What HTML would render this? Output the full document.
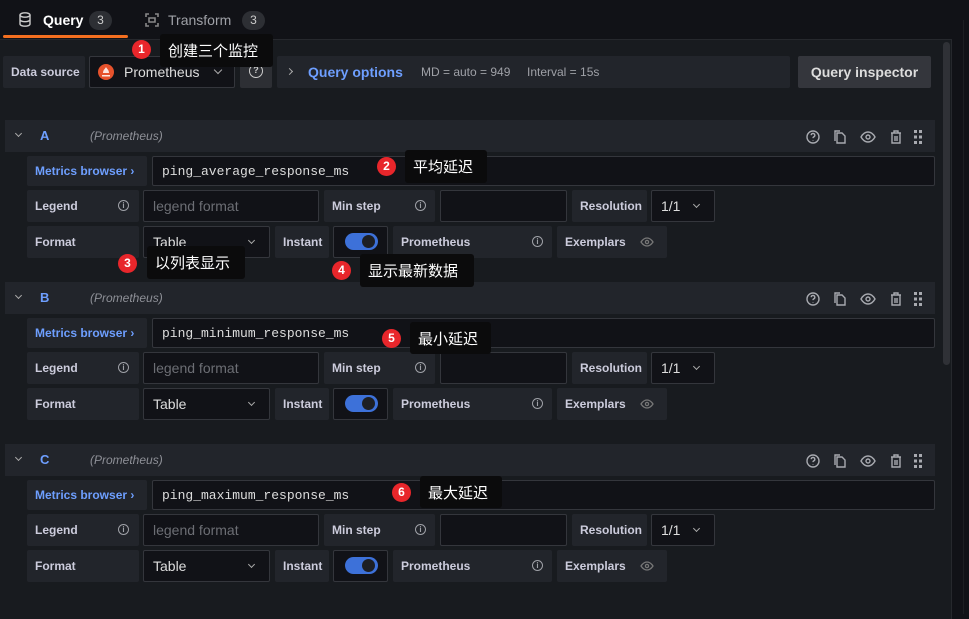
<!DOCTYPE html><html><head><meta charset="utf-8"><style>
*{box-sizing:border-box;margin:0;padding:0}
body{width:969px;height:614px;background:#111217;font-family:"Liberation Sans","Noto Sans CJK SC",sans-serif;color:#ccccdc;position:relative;overflow:hidden;font-size:12px}
.a{position:absolute}
.lbl{position:absolute;background:#22252b;border-radius:2px;font-weight:bold;font-size:12px;color:#ccccdc;display:flex;align-items:center;padding-left:8px}
.inp{position:absolute;background:#111217;border:1px solid #34363c;border-radius:2px;display:flex;align-items:center;padding-left:9px;font-size:14px}
.info{position:absolute;width:11px;height:11px;border:1.3px solid #9fa1a7;border-radius:50%;font-size:8px;line-height:9px;text-align:center;color:#9fa1a7;font-weight:bold}
.chev{position:absolute;width:6px;height:6px;border-right:1.4px solid #aaa;border-bottom:1.4px solid #aaa;transform:rotate(45deg)}
.dot{position:absolute;width:19px;height:19px;border-radius:50%;background:#e8262b;color:#fff;font-size:12px;text-align:center;line-height:19px;font-weight:bold}
.tip{position:absolute;background:#0b0b0c;color:#fff;font-size:15px;display:flex;align-items:center;padding-left:8px;border-radius:3px}
.blk{position:absolute;left:0;top:0;width:940px;height:162px}
.ic{position:absolute;top:9px}
</style></head><body>
<!-- tabs -->
<svg class="a" style="left:19px;top:12px" width="12" height="15" viewBox="0 0 12 15"><ellipse cx="6" cy="3" rx="5" ry="2.2" fill="none" stroke="#ccc" stroke-width="1.4"/><path d="M1 3v9c0 1.2 2.2 2.2 5 2.2s5-1 5-2.2V3M1 7.5c0 1.2 2.2 2.2 5 2.2s5-1 5-2.2" fill="none" stroke="#ccc" stroke-width="1.4"/></svg>
<div class="a" style="left:43px;top:12px;font-size:14px;font-weight:bold;color:#fff">Query</div>
<div class="a" style="left:89px;top:11px;width:23px;height:19px;border-radius:10px;background:#2d2f34;color:#ccc;text-align:center;line-height:19px;font-size:12px">3</div>
<div class="a" style="left:3px;top:35px;width:125px;height:3px;background:#f46f20;border-radius:2px"></div>
<svg class="a" style="left:145px;top:13px" width="14" height="14" viewBox="0 0 14 14" fill="none" stroke="#888" stroke-width="1.6"><path d="M1 4V1h3M10 1h3v3M13 10v3h-3M4 13H1v-3M4 5h6v4H4z"/></svg>
<div class="a" style="left:168px;top:12px;font-size:14px;color:#9fa1a7">Transform</div>
<div class="a" style="left:242px;top:11px;width:23px;height:19px;border-radius:10px;background:#2d2f34;color:#ccc;text-align:center;line-height:19px;font-size:12px">3</div>
<!-- panel -->
<div class="a" style="left:0;top:39px;width:952px;height:580px;background:#181b1f;border-top:1px solid #26282d;border-right:1px solid #26282d"></div>
<div class="a" style="left:943px;top:42px;width:7px;height:323px;background:#2f3136;border-radius:4px"></div>
<div class="a" style="left:963px;top:20px;width:1px;height:594px;background:#1c1e22"></div>
<!-- datasource row -->
<div class="lbl" style="left:3px;top:56px;width:82px;height:32px;padding-left:8px">Data source</div>
<div class="inp" style="left:89px;top:56px;width:146px;height:32px;padding-left:8px"><svg width="16" height="16" viewBox="0 0 16 16"><circle cx="8" cy="8" r="8" fill="#e6522c"/><path d="M4 11h8v1.5H4zM8 3c1 2 3 3 3 6H5c0-3 2-4 3-6z" fill="#fff" opacity=".85"/></svg><span style="margin-left:10px;color:#ddd">Prometheus</span></div>
<div class="chev" style="left:215px;top:67px"></div>
<div class="a" style="left:240px;top:56px;width:32px;height:32px;background:#2d2f34;border-radius:2px"></div>
<div class="info" style="left:249px;top:64px;width:14px;height:14px;line-height:11px;font-size:9px;color:#ccc;border-color:#ccc">?</div>
<div class="a" style="left:277px;top:56px;width:513px;height:32px;background:#22252b;border-radius:2px"></div>
<div class="chev" style="left:287px;top:69px;transform:rotate(-45deg);width:5px;height:5px"></div>
<div class="a" style="left:308px;top:64px;font-size:14px;font-weight:bold;color:#6e9fff">Query options</div>
<div class="a" style="left:421px;top:65px;font-size:12px;color:#9fa1a7">MD = auto = 949</div>
<div class="a" style="left:527px;top:65px;font-size:12px;color:#9fa1a7">Interval = 15s</div>
<div class="a" style="left:798px;top:56px;width:133px;height:32px;background:#34363c;border-radius:2px;color:#ddd;font-weight:bold;font-size:14px;text-align:center;line-height:32px">Query inspector</div>

<!-- blocks -->
<div class="blk" style="top:120px"><div class="a" style="left:5px;top:0;width:930px;height:32px;background:#22252b"></div>
<div class="chev" style="left:16px;top:11px;width:5px;height:5px"></div>
<div class="a" style="left:40px;top:8px;font-size:13px;font-weight:bold;color:#6e9fff">A</div>
<div class="a" style="left:90px;top:9px;font-size:12px;font-style:italic;color:#8e9097">(Prometheus)</div>
<svg class="ic" style="left:805px" width="118" height="16" viewBox="0 0 118 16" fill="none" stroke="#a8aab0" stroke-width="1.4"><circle cx="8" cy="8" r="6"/><path d="M6.2 6.2a1.8 1.8 0 1 1 2.5 1.7c-.5.3-.7.6-.7 1.2M8 11v.5"/><path d="M32 4h5l3 3v7h-8z M30 12V2h5"/><path d="M56 8c2-3.5 4-5 7-5s5 1.5 7 5c-2 3.5-4 5-7 5s-5-1.5-7-5z"/><circle cx="63" cy="8" r="2"/><path d="M86 4h10M89 4V2h4v2M87 4v10h8V4M90 7v5M92 7v5"/><g fill="#a8aab0" stroke="none"><rect x="109" y="1" width="3" height="3"/><rect x="114" y="1" width="3" height="3"/><rect x="109" y="6.5" width="3" height="3"/><rect x="114" y="6.5" width="3" height="3"/><rect x="109" y="12" width="3" height="3"/><rect x="114" y="12" width="3" height="3"/></g></svg>
<div class="lbl" style="left:27px;top:36px;width:120px;height:30px;color:#6e9fff">Metrics browser ›</div>
<div class="inp" style="left:152px;top:36px;width:783px;height:30px;font-family:'Liberation Mono',monospace;font-size:13px;color:#ddd">ping_average_response_ms</div>
<div class="lbl" style="left:27px;top:70px;width:112px;height:32px">Legend</div><div class="info" style="left:118px;top:80px">i</div>
<div class="inp" style="left:143px;top:70px;width:176px;height:32px;color:#6c6e74">legend format</div>
<div class="lbl" style="left:324px;top:70px;width:111px;height:32px">Min step</div><div class="info" style="left:415px;top:80px">i</div>
<div class="inp" style="left:440px;top:70px;width:127px;height:32px"></div>
<div class="lbl" style="left:572px;top:70px;width:75px;height:32px">Resolution</div>
<div class="inp" style="left:651px;top:70px;width:64px;height:32px;color:#ddd">1/1</div><div class="chev" style="left:694px;top:82px;width:5px;height:5px"></div>
<div class="lbl" style="left:27px;top:106px;width:112px;height:32px">Format</div>
<div class="inp" style="left:143px;top:106px;width:127px;height:32px;color:#ddd">Table</div><div class="chev" style="left:249px;top:118px;width:5px;height:5px"></div>
<div class="lbl" style="left:275px;top:106px;width:54px;height:32px">Instant</div>
<div class="inp" style="left:333px;top:106px;width:55px;height:32px"></div>
<div class="a" style="left:345px;top:113px;width:33px;height:17px;border-radius:9px;background:#3d71d9"></div><div class="a" style="left:362px;top:115px;width:13px;height:13px;border-radius:50%;background:#1d1f24"></div>
<div class="lbl" style="left:393px;top:106px;width:159px;height:32px">Prometheus</div><div class="info" style="left:532px;top:116px">i</div>
<div class="lbl" style="left:557px;top:106px;width:110px;height:32px">Exemplars</div>
<svg class="a" style="left:640px;top:117px" width="14" height="10" viewBox="0 0 14 10" fill="none" stroke="#777" stroke-width="1.3"><path d="M1 5c2-3 4-4 6-4s4 1 6 4c-2 3-4 4-6 4S3 8 1 5z"/><circle cx="7" cy="5" r="1.6"/></svg>
</div>

<div class="blk" style="top:282px"><div class="a" style="left:5px;top:0;width:930px;height:32px;background:#22252b"></div>
<div class="chev" style="left:16px;top:11px;width:5px;height:5px"></div>
<div class="a" style="left:40px;top:8px;font-size:13px;font-weight:bold;color:#6e9fff">B</div>
<div class="a" style="left:90px;top:9px;font-size:12px;font-style:italic;color:#8e9097">(Prometheus)</div>
<svg class="ic" style="left:805px" width="118" height="16" viewBox="0 0 118 16" fill="none" stroke="#a8aab0" stroke-width="1.4"><circle cx="8" cy="8" r="6"/><path d="M6.2 6.2a1.8 1.8 0 1 1 2.5 1.7c-.5.3-.7.6-.7 1.2M8 11v.5"/><path d="M32 4h5l3 3v7h-8z M30 12V2h5"/><path d="M56 8c2-3.5 4-5 7-5s5 1.5 7 5c-2 3.5-4 5-7 5s-5-1.5-7-5z"/><circle cx="63" cy="8" r="2"/><path d="M86 4h10M89 4V2h4v2M87 4v10h8V4M90 7v5M92 7v5"/><g fill="#a8aab0" stroke="none"><rect x="109" y="1" width="3" height="3"/><rect x="114" y="1" width="3" height="3"/><rect x="109" y="6.5" width="3" height="3"/><rect x="114" y="6.5" width="3" height="3"/><rect x="109" y="12" width="3" height="3"/><rect x="114" y="12" width="3" height="3"/></g></svg>
<div class="lbl" style="left:27px;top:36px;width:120px;height:30px;color:#6e9fff">Metrics browser ›</div>
<div class="inp" style="left:152px;top:36px;width:783px;height:30px;font-family:'Liberation Mono',monospace;font-size:13px;color:#ddd">ping_minimum_response_ms</div>
<div class="lbl" style="left:27px;top:70px;width:112px;height:32px">Legend</div><div class="info" style="left:118px;top:80px">i</div>
<div class="inp" style="left:143px;top:70px;width:176px;height:32px;color:#6c6e74">legend format</div>
<div class="lbl" style="left:324px;top:70px;width:111px;height:32px">Min step</div><div class="info" style="left:415px;top:80px">i</div>
<div class="inp" style="left:440px;top:70px;width:127px;height:32px"></div>
<div class="lbl" style="left:572px;top:70px;width:75px;height:32px">Resolution</div>
<div class="inp" style="left:651px;top:70px;width:64px;height:32px;color:#ddd">1/1</div><div class="chev" style="left:694px;top:82px;width:5px;height:5px"></div>
<div class="lbl" style="left:27px;top:106px;width:112px;height:32px">Format</div>
<div class="inp" style="left:143px;top:106px;width:127px;height:32px;color:#ddd">Table</div><div class="chev" style="left:249px;top:118px;width:5px;height:5px"></div>
<div class="lbl" style="left:275px;top:106px;width:54px;height:32px">Instant</div>
<div class="inp" style="left:333px;top:106px;width:55px;height:32px"></div>
<div class="a" style="left:345px;top:113px;width:33px;height:17px;border-radius:9px;background:#3d71d9"></div><div class="a" style="left:362px;top:115px;width:13px;height:13px;border-radius:50%;background:#1d1f24"></div>
<div class="lbl" style="left:393px;top:106px;width:159px;height:32px">Prometheus</div><div class="info" style="left:532px;top:116px">i</div>
<div class="lbl" style="left:557px;top:106px;width:110px;height:32px">Exemplars</div>
<svg class="a" style="left:640px;top:117px" width="14" height="10" viewBox="0 0 14 10" fill="none" stroke="#777" stroke-width="1.3"><path d="M1 5c2-3 4-4 6-4s4 1 6 4c-2 3-4 4-6 4S3 8 1 5z"/><circle cx="7" cy="5" r="1.6"/></svg>
</div>

<div class="blk" style="top:444px"><div class="a" style="left:5px;top:0;width:930px;height:32px;background:#22252b"></div>
<div class="chev" style="left:16px;top:11px;width:5px;height:5px"></div>
<div class="a" style="left:40px;top:8px;font-size:13px;font-weight:bold;color:#6e9fff">C</div>
<div class="a" style="left:90px;top:9px;font-size:12px;font-style:italic;color:#8e9097">(Prometheus)</div>
<svg class="ic" style="left:805px" width="118" height="16" viewBox="0 0 118 16" fill="none" stroke="#a8aab0" stroke-width="1.4"><circle cx="8" cy="8" r="6"/><path d="M6.2 6.2a1.8 1.8 0 1 1 2.5 1.7c-.5.3-.7.6-.7 1.2M8 11v.5"/><path d="M32 4h5l3 3v7h-8z M30 12V2h5"/><path d="M56 8c2-3.5 4-5 7-5s5 1.5 7 5c-2 3.5-4 5-7 5s-5-1.5-7-5z"/><circle cx="63" cy="8" r="2"/><path d="M86 4h10M89 4V2h4v2M87 4v10h8V4M90 7v5M92 7v5"/><g fill="#a8aab0" stroke="none"><rect x="109" y="1" width="3" height="3"/><rect x="114" y="1" width="3" height="3"/><rect x="109" y="6.5" width="3" height="3"/><rect x="114" y="6.5" width="3" height="3"/><rect x="109" y="12" width="3" height="3"/><rect x="114" y="12" width="3" height="3"/></g></svg>
<div class="lbl" style="left:27px;top:36px;width:120px;height:30px;color:#6e9fff">Metrics browser ›</div>
<div class="inp" style="left:152px;top:36px;width:783px;height:30px;font-family:'Liberation Mono',monospace;font-size:13px;color:#ddd">ping_maximum_response_ms</div>
<div class="lbl" style="left:27px;top:70px;width:112px;height:32px">Legend</div><div class="info" style="left:118px;top:80px">i</div>
<div class="inp" style="left:143px;top:70px;width:176px;height:32px;color:#6c6e74">legend format</div>
<div class="lbl" style="left:324px;top:70px;width:111px;height:32px">Min step</div><div class="info" style="left:415px;top:80px">i</div>
<div class="inp" style="left:440px;top:70px;width:127px;height:32px"></div>
<div class="lbl" style="left:572px;top:70px;width:75px;height:32px">Resolution</div>
<div class="inp" style="left:651px;top:70px;width:64px;height:32px;color:#ddd">1/1</div><div class="chev" style="left:694px;top:82px;width:5px;height:5px"></div>
<div class="lbl" style="left:27px;top:106px;width:112px;height:32px">Format</div>
<div class="inp" style="left:143px;top:106px;width:127px;height:32px;color:#ddd">Table</div><div class="chev" style="left:249px;top:118px;width:5px;height:5px"></div>
<div class="lbl" style="left:275px;top:106px;width:54px;height:32px">Instant</div>
<div class="inp" style="left:333px;top:106px;width:55px;height:32px"></div>
<div class="a" style="left:345px;top:113px;width:33px;height:17px;border-radius:9px;background:#3d71d9"></div><div class="a" style="left:362px;top:115px;width:13px;height:13px;border-radius:50%;background:#1d1f24"></div>
<div class="lbl" style="left:393px;top:106px;width:159px;height:32px">Prometheus</div><div class="info" style="left:532px;top:116px">i</div>
<div class="lbl" style="left:557px;top:106px;width:110px;height:32px">Exemplars</div>
<svg class="a" style="left:640px;top:117px" width="14" height="10" viewBox="0 0 14 10" fill="none" stroke="#777" stroke-width="1.3"><path d="M1 5c2-3 4-4 6-4s4 1 6 4c-2 3-4 4-6 4S3 8 1 5z"/><circle cx="7" cy="5" r="1.6"/></svg>
</div>

<!-- annotations -->
<div class="dot" style="left:132px;top:40px">1</div><div class="tip" style="left:160px;top:34px;width:113px;height:33px">创建三个监控</div>
<div class="dot" style="left:377px;top:157px">2</div><div class="tip" style="left:405px;top:150px;width:82px;height:33px">平均延迟</div>
<div class="dot" style="left:118px;top:254px">3</div><div class="tip" style="left:147px;top:246px;width:98px;height:33px">以列表显示</div>
<div class="dot" style="left:332px;top:261px">4</div><div class="tip" style="left:360px;top:254px;width:114px;height:33px">显示最新数据</div>
<div class="dot" style="left:382px;top:329px">5</div><div class="tip" style="left:410px;top:322px;width:81px;height:32px">最小延迟</div>
<div class="dot" style="left:392px;top:483px">6</div><div class="tip" style="left:420px;top:476px;width:82px;height:32px">最大延迟</div>
</body></html>
